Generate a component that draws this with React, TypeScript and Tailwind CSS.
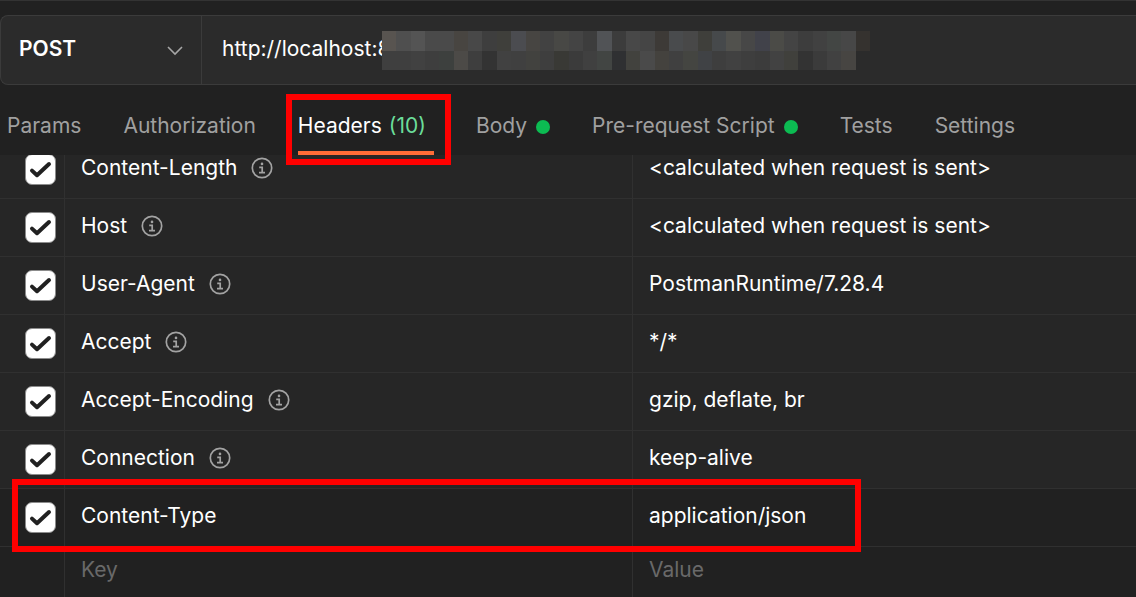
import { useState } from "react";

type Header = { name: string; value: string; auto: boolean };

const headers: Header[] = [
  { name: "Content-Length", value: "<calculated when request is sent>", auto: true },
  { name: "Host", value: "<calculated when request is sent>", auto: true },
  { name: "User-Agent", value: "PostmanRuntime/7.28.4", auto: true },
  { name: "Accept", value: "*/*", auto: true },
  { name: "Accept-Encoding", value: "gzip, deflate, br", auto: true },
  { name: "Connection", value: "keep-alive", auto: true },
  { name: "Content-Type", value: "application/json", auto: false },
];

const mosaic: string[] = [
  "#585450", "#4f4f4f", "#545454", "#4a4a4a", "#4a4a4a", "#484541", "#484848", "#3e3e3e", "#3f3f3b",
  "#4b4c50", "#474542", "#424242", "#484845", "#444444", "#3d3d3d", "#515356", "#3c3c3c", "#484848",
  "#454545", "#3d3a37", "#494b4d", "#484848", "#3f3f3b", "#46494b", "#51514d", "#474747", "#41424a",
  "#4b4b47", "#444444", "#3d3d3d", "#414141", "#434644", "#474747", "#35322f",
  "#3f3f3f", "#3f3f3f", "#414141", "#3e3e3e", "#3d403e", "#4c4a47", "#3e3e3e", "#333333", "#414141",
  "#404040", "#42423f", "#3e3e3e", "#393935", "#3b3b3b", "#404040", "#424543", "#2f3032", "#42423e",
  "#4a4a4a", "#44423e", "#404040", "#444541", "#404245", "#3e3e3e", "#414141", "#3e3e3e", "#3c3c3c",
  "#424242", "#40403c", "#333333", "#3b3b3b", "#414141", "#474542", "#2b2b2b",
];

const tabs = [
  { label: "Params" },
  { label: "Authorization" },
  { label: "Headers", count: 10 },
  { label: "Body", dot: true },
  { label: "Pre-request Script", dot: true },
  { label: "Tests" },
  { label: "Settings" },
];

function InfoIcon() {
  return (
    <svg className="h-[22px] w-[22px] shrink-0 text-[#a3a3a3]" viewBox="0 0 22 22" fill="none" stroke="currentColor" aria-hidden="true">
      <circle cx="11" cy="11" r="9.7" strokeWidth="1.7" />
      <circle cx="11" cy="6.9" r="1.3" fill="currentColor" stroke="none" />
      <path d="M8.2 10.3h3v5.2M8 15.6h6" strokeWidth="1.7" />
    </svg>
  );
}

function CheckBox({ label }: { label: string }) {
  return (
    <span className="relative ml-[25px] block h-[31px] w-[31px]">
      <input
        type="checkbox"
        defaultChecked
        aria-label={label}
        className="peer block h-full w-full appearance-none rounded-[7px] border border-[#8c8c8c] checked:bg-white"
      />
      <svg
        className="pointer-events-none absolute inset-0 hidden h-full w-full peer-checked:block"
        viewBox="0 0 31 31"
        fill="none"
        stroke="#212121"
        strokeWidth="4"
        strokeLinecap="round"
        strokeLinejoin="round"
        aria-hidden="true"
      >
        <path d="M7 16.6l5 4.6L24 10" />
      </svg>
    </span>
  );
}

function RequestBar() {
  return (
    <div className="mt-[14px] flex h-[70px] shrink-0 rounded-l-lg border border-r-0 border-[#3b3b3b] bg-[#2b2b2b]">
      <div className="relative flex w-[201px] shrink-0 border-r border-[#3b3b3b]">
        <select
          aria-label="Method"
          className="w-full appearance-none bg-transparent pb-[2px] pl-[18px] font-semibold text-white outline-none"
        >
          <option>POST</option>
        </select>
        <svg
          className="pointer-events-none absolute top-[30px] right-[18px] h-[10px] w-4"
          viewBox="0 0 16 10"
          fill="none"
          stroke="#a6a6a6"
          strokeWidth="1.6"
          aria-hidden="true"
        >
          <path d="M1 1l7 7 7-7" />
        </svg>
      </div>
      <div className="relative flex flex-1">
        <input
          type="text"
          aria-label="Request URL"
          defaultValue="http://localhost:8"
          className="w-full bg-transparent pb-[2px] pl-5 text-white outline-none"
        />
        <div className="absolute top-[15px] left-[180px] grid h-[39px] w-[488px] grid-cols-[repeat(34,minmax(0,1fr))] grid-rows-[20px_19px]">
          {mosaic.map((color, i) => (
            <span key={i} style={{ backgroundColor: color }} />
          ))}
        </div>
      </div>
    </div>
  );
}

export default function App() {
  const [active, setActive] = useState("Headers");

  return (
    <main className="flex h-screen flex-col overflow-hidden border-t border-[#333333] bg-[#212121] font-['Inter',sans-serif] text-[21px] text-white">
      <RequestBar />

      <nav className="flex h-[70px] shrink-0 gap-[42px] pl-[7px] whitespace-nowrap">
        {tabs.map((tab) => {
          const selected = tab.label === active;
          return (
            <button
              key={tab.label}
              type="button"
              onClick={() => setActive(tab.label)}
              className={
                selected
                  ? "relative flex items-center border-b-4 border-[#ff6c37] pt-4 pr-2 text-white"
                  : "relative flex items-center border-b-4 border-transparent pt-4 text-[#a0a0a0]"
              }
            >
              {tab.label}
              {tab.count && <span className="ml-[7px] text-[#6bdd9a]">({tab.count})</span>}
              {tab.dot && <span className="mt-px ml-[9px] h-[14px] w-[14px] rounded-full bg-[#0cbb52]" />}
              {tab.count && (
                <span className="pointer-events-none absolute top-[9px] -right-[17px] -bottom-[14px] -left-3 z-10 border-6 border-[#ff0000]" />
              )}
            </button>
          );
        })}
      </nav>

      <section className="flex-1 overflow-hidden bg-[#212121]">
        <table className="-mt-[14px] w-full table-fixed border-separate border-spacing-0 text-left">
          <colgroup>
            <col className="w-[65px]" />
            <col className="w-1/2" />
            <col />
          </colgroup>
          <tbody>
            {headers.map((h) => (
              <tr key={h.name} className={h.auto ? "relative h-[58px] bg-[#262626]" : "relative h-[58px] bg-[#212121]"}>
                <td className="border-r border-b border-[#303030] p-0">
                  <CheckBox label={h.name} />
                  {!h.auto && (
                    <span className="pointer-events-none absolute -top-[10px] -bottom-[5px] left-3 z-10 w-[849px] border-6 border-[#ff0000]" />
                  )}
                </td>
                <td className="border-r border-b border-[#303030] p-0 pb-1 pl-4">
                  <span className="flex items-center gap-[14px]">
                    {h.name}
                    {h.auto && <InfoIcon />}
                  </span>
                </td>
                <td className="border-b border-[#303030] p-0 pb-1 pl-4">{h.value}</td>
              </tr>
            ))}
            <tr className="h-[58px]">
              <td className="border-r border-[#303030] p-0" />
              <td className="border-r border-[#303030] p-0 pb-3 pl-4">
                <input type="text" aria-label="Key" placeholder="Key" className="w-full bg-transparent outline-none placeholder:text-[#696969]" />
              </td>
              <td className="p-0 pb-3 pl-4">
                <input type="text" aria-label="Value" placeholder="Value" className="w-full bg-transparent outline-none placeholder:text-[#696969]" />
              </td>
            </tr>
          </tbody>
        </table>
      </section>
    </main>
  );
}
